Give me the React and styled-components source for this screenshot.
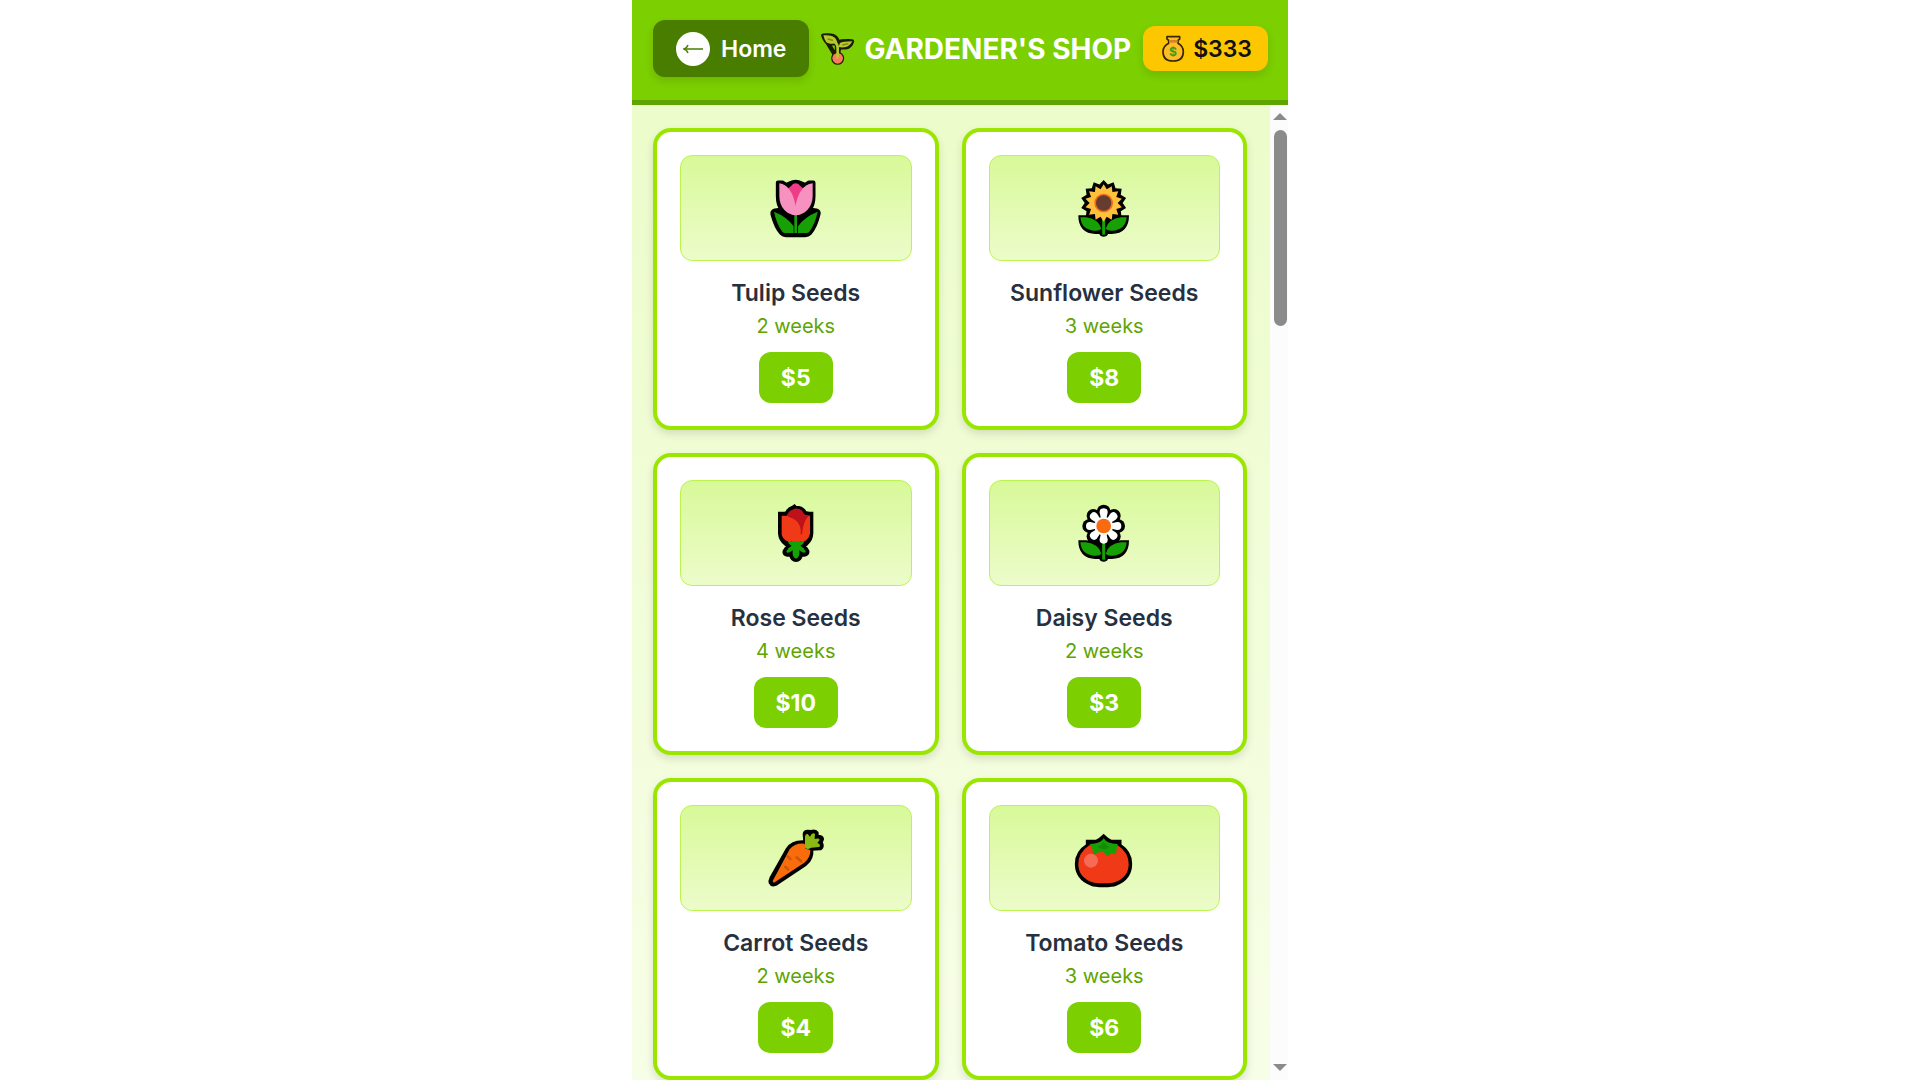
import React from 'react';
import styled, { createGlobalStyle } from 'styled-components';

const Tulip = () => (
    <PlantIcon viewBox='36 27 204 204' aria-hidden='true'>
        <path
            d='M84 53 H97 L108 60 C116 59 124 51 137 51 C150 51 158 59 166 60 L177 53 H190 V94 Q190 120 178 134 L199 137 Q208 140 205 148 Q196 186 179 205 Q174 210 166 210 H108 Q100 210 95 205 Q78 186 68 148 Q66 140 75 137 L96 134 Q84 120 84 94 Z'
            fill='#000' stroke='#000' strokeWidth='13' strokeLinejoin='round'
        />
        <path d='M72 140 Q112 156 131 184 V204 H105 Q100 204 97 200 Q80 178 72 140 Z' fill='#16a005' />
        <path d='M203 140 Q163 156 144 184 V204 H170 Q175 204 178 200 Q195 178 203 140 Z' fill='#16a005' />
        <path d='M137 148 V204' stroke='#16a005' strokeWidth='8' />
        <path d='M112 72 Q124 64 129 57 Q137 52 145 57 Q150 64 162 72 L138 128 Z' fill='#ee3c86' />
        <path d='M88 55 C104 56 130 74 137 124 C144 74 170 56 188 55 V94 C188 128 162 151 138 151 C112 151 88 128 88 94 Z' fill='#f691c0' />
    </PlantIcon>
);

const Leaves = () => (
    <g fill='#16a005'>
        <path d='M63 157 H80 Q118 162 126 191 Q119 199 104 197 Q66 194 63 157 Z' />
        <path d='M202 157 H185 Q147 162 139 191 Q146 199 161 197 Q199 194 202 157 Z' />
        <path d='M133 158 V209' stroke='#16a005' strokeWidth='9' />
    </g>
);

const leafOutline = 'M57 151 H82 L108 157 H158 L184 151 H209 Q209 206 157 207 H146 Q143 215 133 215 Q123 215 120 207 H109 Q57 206 57 151 Z';

const starPoints = (cx, cy, outer, inner, count) => {
    let points = [];

    for (let i = 0; i < count * 2; i++) {
        const radius = i % 2 === 0 ? outer : inner;
        const angle = (Math.PI * i) / count - Math.PI / 2;
        points.push(`${cx + radius * Math.cos(angle)},${cy + radius * Math.sin(angle)}`);
    }

    return points.join(' ');
};

const Sunflower = () => (
    <PlantIcon viewBox='32 27 204 204' aria-hidden='true'>
        <path d={leafOutline} />
        <path d='M84 140 H182 L176 168 H90 Z' />
        <polygon points={starPoints(133, 114, 69, 57, 14)} />
        <Leaves />
        <polygon points={starPoints(133, 114, 56, 42, 14)} fill='#ffc13b' />
        <circle cx='133' cy='114' r='28' fill='#f26a17' />
        <circle cx='133' cy='114' r='23' fill='#653d30' />
    </PlantIcon>
);

const Rose = () => (
    <PlantIcon viewBox='36 27 204 204' aria-hidden='true'>
        <path
            d='M90 71 H103 Q108 71 112 67 Q117 56 130 52 L133 50 L136 53 Q156 52 164 67 Q168 71 184 71 V130 Q183 148 170 160 L162 168 L172 183 Q174 193 163 194 H153 Q150 210 138 210 Q126 210 123 194 H112 Q101 193 104 183 L114 168 L106 160 Q91 148 90 130 Z'
            stroke='#000' strokeWidth='12' strokeLinejoin='miter'
        />
        <path d='M112 151 Q124 156 138 151 Q152 156 165 151 Q161 163 151 167 Q161 172 167 184 Q168 191 157 187 L148 181 Q150 204 138 206 Q126 204 128 181 L119 187 Q108 191 109 184 Q115 172 125 167 Q115 163 112 151 Z' fill='#16a005' />
        <path d='M95 77 H111 Q115 62 136 56 Q155 55 161 72 Q164 76 180 77 V132 Q178 143 166 153 H110 Q96 144 95 132 Z' fill='#f03a17' />
        <path d='M111 77 Q115 62 136 56 Q155 55 161 71 Q165 77 177 77 Q160 91 156 133 H152 Q155 95 124 84 Q113 80 111 77 Z' fill='#bd111b' />
    </PlantIcon>
);

const Daisy = () => {
    const petals = [0, 45, 90, 135, 180, 225, 270, 315];

    return (
        <PlantIcon viewBox='32 27 204 204' aria-hidden='true'>
            <path d={leafOutline} />
            <path d='M84 140 H182 L176 168 H90 Z' />
            <circle cx='133' cy='108' r='52' />
            {petals.map((angle) => (
                <circle key={angle} cx='133' cy='64' r='20' transform={`rotate(${angle} 133 108)`} />
            ))}
            <Leaves />
            {petals.map((angle) => (
                <path
                    key={angle}
                    d='M126 90 L121 68 Q120 55 133 55 Q146 55 145 68 L140 90 Z'
                    fill='#fff'
                    transform={`rotate(${angle} 133 108)`}
                />
            ))}
            <circle cx='133' cy='108' r='28' fill='#fff' />
            <circle cx='133' cy='108' r='22' fill='#fa6a10' />
        </PlantIcon>
    );
};

const Carrot = () => (
    <PlantIcon viewBox='36 27 204 204' aria-hidden='true'>
        <path
            d='M164 58 Q164 50 173 50 L184 51 Q196 47 200 54 V65 Q215 64 216 72 L212 83 Q219 94 211 100 L184 101 Q187 131 166 147 L76 207 Q66 211 62 203 Q60 198 64 190 L113 103 Q127 82 157 82 L166 80 Z'
            stroke='#000' strokeWidth='12' strokeLinejoin='round'
        />
        <path d='M165 98 V66 Q166 55 173 57 L180 65 Q186 51 195 56 L194 72 Q208 68 209 75 L202 84 Q214 89 208 96 L184 98 L173 103 Z' fill='#8bb916' />
        <path d='M119 103 Q135 83 164 86 L167 101 L181 105 Q181 129 163 143 L74 202 Q69 204 68 198 Z' fill='#fa6c0b' />
        <g fill='none' stroke='#cb5711' strokeWidth='8' strokeLinecap='round'>
            <path d='M140 127 L153 139' />
            <path d='M113 124 L121 132' />
            <path d='M106 156 L114 163' />
        </g>
    </PlantIcon>
);

const Tomato = () => (
    <PlantIcon viewBox='32 27 204 204' aria-hidden='true'>
        <path
            d='M85 80 H110 Q120 77 133 64 Q146 77 156 80 H181 V91 Q213 112 213 146 Q213 190 169 207 Q160 211 133 211 Q106 211 97 207 Q52 190 52 146 Q52 112 85 91 Z'
            stroke='#000' strokeWidth='11'
        />
        <path d='M90 91 Q57 113 57 147 Q57 187 99 202 Q108 205 133 205 Q158 205 166 202 Q208 187 208 147 Q208 113 175 91 Z' fill='#f03a17' />
        <path d='M91 87 Q123 87 133 70 Q143 87 175 87 Q170 107 170 119 L156 113 L145 124 L132 110 L119 112 L101 121 Q103 102 91 87 Z' fill='#16a005' />
        <path d='M115 96 Q127 92 133 80 Q139 92 150 96 Q133 110 115 96 Z' fill='#138b08' />
        <circle cx='95' cy='137' r='21' fill='#f66b55' />
    </PlantIcon>
);

const Seedling = () => (
    <SeedlingIcon viewBox='33 33 102 102' aria-hidden='true'>
        <g stroke='#1a1c04' strokeWidth='13' strokeLinejoin='round' strokeLinecap='round'>
            <path d='M40 44 Q69 40 78 51 Q83 57 84 64 Q95 60 126 61 Q121 78 106 79 H88 Q84 90 84 110 M81 111 V67 L56 67 Q47 62 40 44 Z' />
            <circle cx='83' cy='112' r='13' />
        </g>
        <circle cx='83' cy='112' r='16' fill='#fa7c5c' />
        <path d='M40 43 Q68 41 77 53 Q82 60 82 67 Q56 71 48 62 Q43 56 40 43 Z' fill='#b9c92b' />
        <path d='M127 61 Q97 61 90 66 L85 78 Q104 81 114 76 Q122 71 127 61 Z' fill='#b9c92b' />
        <path d='M53 54 L69 58 M97 72 L115 68' stroke='#758b13' strokeWidth='4' />
        <path d='M77 66 Q84 72 83 84 V109' fill='none' stroke='#b9c92b' strokeWidth='8' strokeLinecap='round' />
    </SeedlingIcon>
);

const MoneyBag = () => (
    <MoneyIcon viewBox='606 102 72 87' aria-hidden='true'>
        <path
            d='M624 110 H662 V117 L657 121 V130 Q673 139 673 155 Q673 183 642 183 Q612 183 612 155 Q612 139 629 130 V121 L624 117 Z'
            fill='#fdbd24' stroke='#3a2500' strokeWidth='5' strokeLinejoin='round'
        />
        <path d='M630 120 H656 V128 H630 Z' fill='#d78320' />
        <text x='642' y='168' textAnchor='middle' fontFamily='Inter, sans-serif' fontSize='36' fontWeight='700' fill='#35a01a'>$</text>
    </MoneyIcon>
);

const seeds = [
    { 'name': 'Tulip Seeds', 'time': '2 weeks', 'price': 5, 'icon': Tulip },
    { 'name': 'Sunflower Seeds', 'time': '3 weeks', 'price': 8, 'icon': Sunflower },
    { 'name': 'Rose Seeds', 'time': '4 weeks', 'price': 10, 'icon': Rose },
    { 'name': 'Daisy Seeds', 'time': '2 weeks', 'price': 3, 'icon': Daisy },
    { 'name': 'Carrot Seeds', 'time': '2 weeks', 'price': 4, 'icon': Carrot },
    { 'name': 'Tomato Seeds', 'time': '3 weeks', 'price': 6, 'icon': Tomato },
];

const SeedCard = ({ seed }) => {
    const Plant = seed.icon;

    return (
        <Card>
            <Preview>
                <Plant />
            </Preview>
            <SeedName>{seed.name}</SeedName>
            <GrowTime>{seed.time}</GrowTime>
            <PriceButton type='button'>${seed.price}</PriceButton>
        </Card>
    );
};

const App = () => (
    <Shop>
        <GlobalStyle />
        <Header>
            <HomeButton type='button'>
                <ArrowCircle>
                    <svg width='20' height='12' viewBox='0 0 20 12' fill='none' stroke='#497d00' aria-hidden='true'>
                        <path d='M1 6 H20' strokeWidth='1.5' />
                        <path d='M5 2 Q4 5 1 6 Q4 7 5 10' strokeWidth='1.5' />
                    </svg>
                </ArrowCircle>
                Home
            </HomeButton>
            <Title>
                <Seedling />
                GARDENER'S SHOP
            </Title>
            <Balance>
                <MoneyBag />
                $333
            </Balance>
        </Header>
        <Body>
            <SeedGrid>
                {seeds.map((seed) => <SeedCard key={seed.name} seed={seed} />)}
            </SeedGrid>
            <ScrollTrack aria-hidden='true'>
                <svg width='14' height='8' viewBox='0 0 14 8' fill='#8b8b8b'>
                    <path d='M7 0 L14 7 H0 Z' />
                </svg>
                <ScrollRail>
                    <ScrollThumb />
                </ScrollRail>
                <svg width='14' height='8' viewBox='0 0 14 8' fill='#8b8b8b'>
                    <path d='M0 0 H14 L7 7 Z' />
                </svg>
            </ScrollTrack>
        </Body>
    </Shop>
);

const GlobalStyle = createGlobalStyle`
    * {
        box-sizing: border-box;
    }

    body {
        margin: 0;
        background: #ffffff;
        font-family: Inter, sans-serif;
    }

    button {
        border: none;
        font-family: inherit;
        cursor: pointer;
    }
`;

const Shop = styled.div`
    display: flex;
    flex-direction: column;
    max-width: 656px;
    height: 100vh;
    margin: 0 auto;
`;

const Header = styled.header`
    display: flex;
    flex-shrink: 0;
    align-items: center;
    justify-content: space-between;
    padding: 20px 20px 23px 21px;
    border-bottom: 5px solid #5ea500;
    background: #7ccf00;
`;

const HomeButton = styled.button`
    display: flex;
    align-items: center;
    gap: 11px;
    height: 57px;
    padding: 0 23px;
    border-radius: 12px;
    background: #497d00;
    box-shadow: 0 4px 8px rgba(0, 0, 0, 0.12);
    color: #ffffff;
    font-size: 23px;
    font-weight: 600;
`;

const ArrowCircle = styled.span`
    display: flex;
    align-items: center;
    justify-content: center;
    width: 34px;
    height: 34px;
    border-radius: 50%;
    background: #ffffff;
`;

const Title = styled.h1`
    display: flex;
    align-items: center;
    gap: 9px;
    margin: 0;
    color: #ffffff;
    font-size: 28px;
    font-weight: 700;
    white-space: nowrap;
`;

const SeedlingIcon = styled.svg`
    width: 34px;
    height: 34px;
`;

const Balance = styled.div`
    display: flex;
    align-items: center;
    gap: 8px;
    height: 45px;
    padding: 0 16px 0 18px;
    border-radius: 12px;
    background: #fdc700;
    box-shadow: 0 4px 8px rgba(0, 0, 0, 0.12);
    color: #111111;
    font-size: 23px;
    font-weight: 600;
`;

const MoneyIcon = styled.svg`
    width: 24px;
    height: 29px;
`;

const Body = styled.div`
    display: flex;
    flex: 1;
    min-height: 0;
`;

const SeedGrid = styled.main`
    display: grid;
    flex: 1;
    grid-template-columns: 1fr 1fr;
    align-content: start;
    gap: 23px;
    overflow-y: auto;
    padding: 23px 23px 0 21px;
    background: linear-gradient(#ecfcca, #f7fee7);
    scrollbar-width: none;
`;

const Card = styled.article`
    display: flex;
    flex-direction: column;
    align-items: center;
    padding: 23px;
    border: 4px solid #9ae600;
    border-radius: 18px;
    background: #ffffff;
    box-shadow: 0 4px 8px rgba(0, 0, 0, 0.12);
`;

const Preview = styled.div`
    display: flex;
    align-items: center;
    justify-content: center;
    width: 100%;
    height: 106px;
    margin-bottom: 16px;
    border: 1px solid #bbf451;
    border-radius: 12px;
    background: linear-gradient(#d8f999, #ecfcca);
`;

const PlantIcon = styled.svg`
    width: 68px;
    height: 68px;
`;

const SeedName = styled.h2`
    margin: 0 0 4px 0;
    color: #27303f;
    font-size: 23px;
    font-weight: 600;
    line-height: 32px;
`;

const GrowTime = styled.p`
    margin: 0 0 12px 0;
    color: #5ea500;
    font-size: 20px;
    line-height: 27px;
`;

const PriceButton = styled.button`
    height: 51px;
    padding: 0 22px;
    border-radius: 12px;
    background: #7ccf00;
    color: #ffffff;
    font-size: 23px;
    font-weight: 700;
`;

const ScrollTrack = styled.div`
    display: flex;
    flex-direction: column;
    align-items: center;
    width: 18px;
    padding: 8px 0 8px 2px;
    background: #fcfcfc;
`;

const ScrollRail = styled.div`
    flex: 1;
    padding: 9px 0;
`;

const ScrollThumb = styled.div`
    width: 13px;
    height: 196px;
    border-radius: 7px;
    background: #8b8b8b;
`;

export default App;
